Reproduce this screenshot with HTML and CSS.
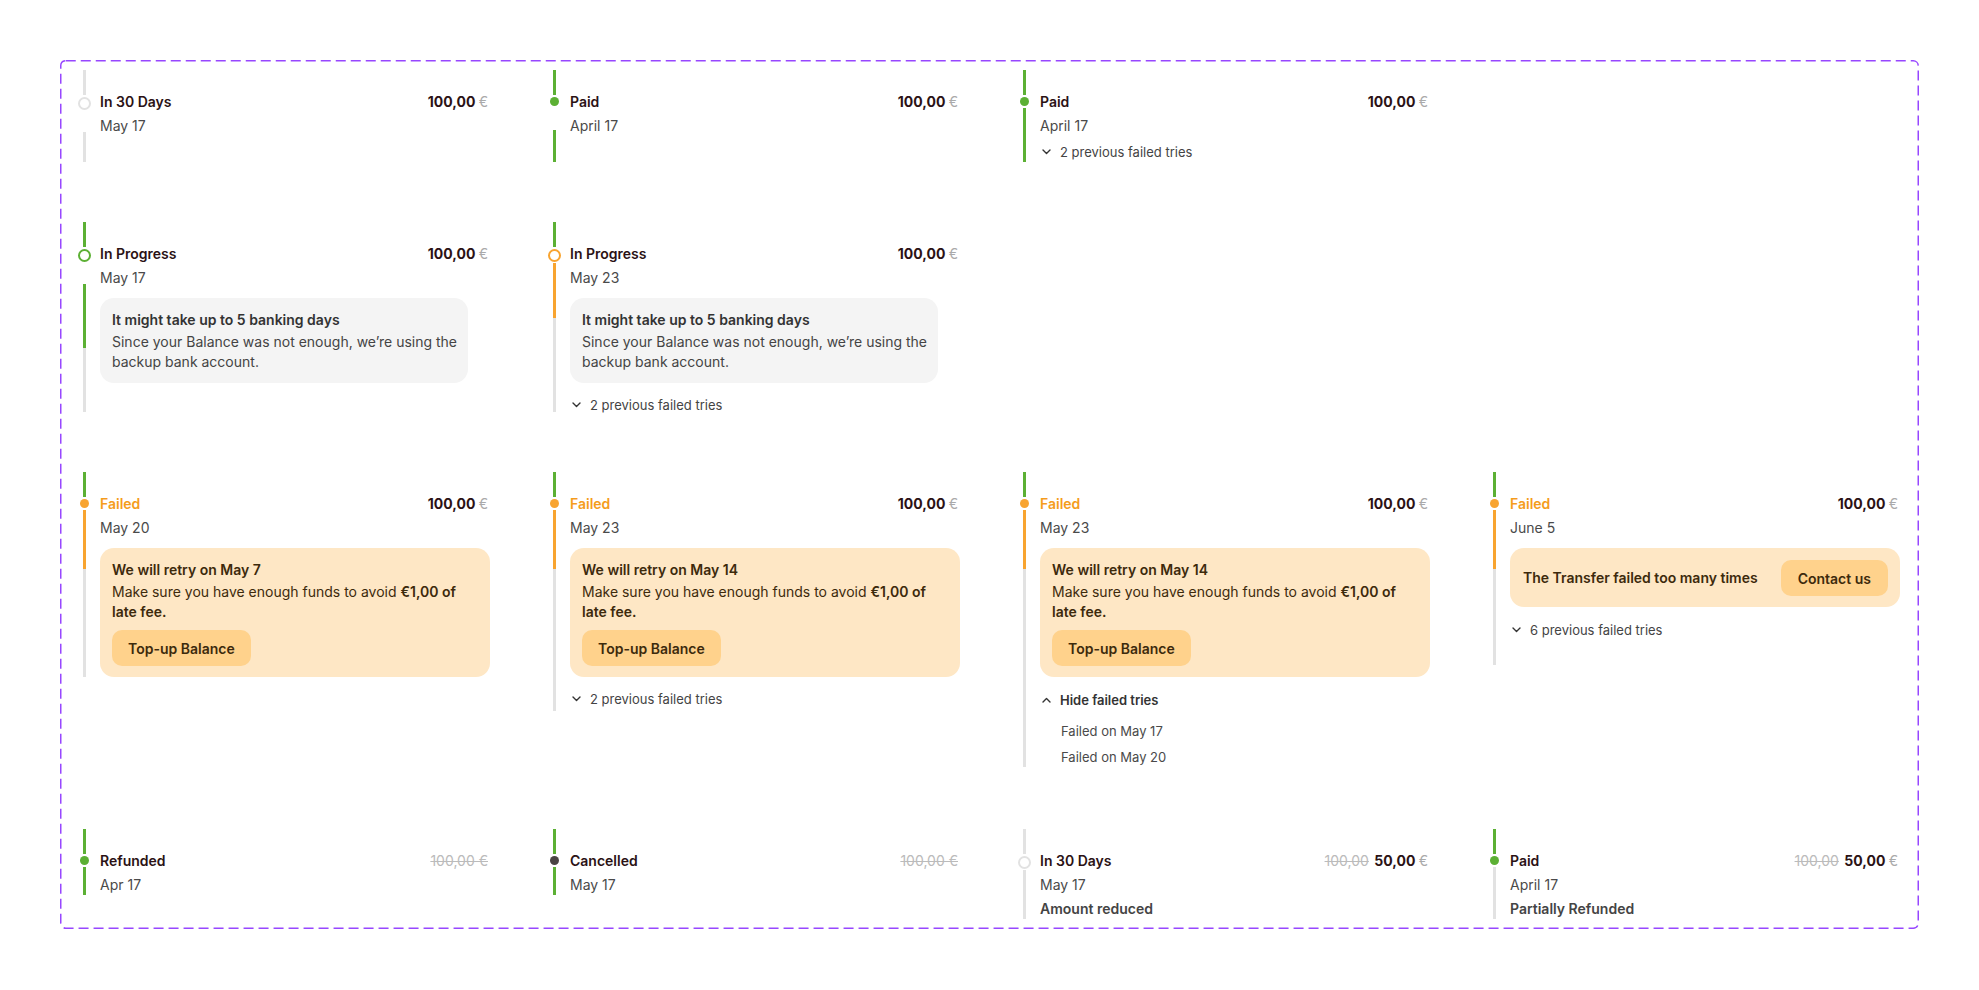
FILE: index.html
```html
<!DOCTYPE html>
<html lang="en">

<head>
    <meta charset="UTF-8">
    <meta name="viewport" content="width=device-width, initial-scale=1.0">
    <title>Payment Timeline Item</title>
    <link rel="stylesheet" href="styles.css">
</head>

<body>
    <div class="frame">

        <!-- row 1 -->
        <div class="item h92">
            <div class="rail">
                <span class="seg grey top"></span>
                <span class="ring grey"></span>
                <span class="space s21"></span>
                <span class="seg grey fill"></span>
            </div>
            <div class="body">
                <div class="head"><span class="title">In 30 Days</span><span class="amount">100,00 <span class="cur">€</span></span></div>
                <div class="date">May 17</div>
            </div>
        </div>

        <div class="item h92">
            <div class="rail">
                <span class="seg green top"></span>
                <span class="dot green"></span>
                <span class="space s22"></span>
                <span class="seg green fill"></span>
            </div>
            <div class="body">
                <div class="head"><span class="title">Paid</span><span class="amount">100,00 <span class="cur">€</span></span></div>
                <div class="date">April 17</div>
            </div>
        </div>

        <div class="item h92">
            <div class="rail">
                <span class="seg green top"></span>
                <span class="dot green"></span>
                <span class="seg green fill"></span>
            </div>
            <div class="body">
                <div class="head"><span class="title">Paid</span><span class="amount">100,00 <span class="cur">€</span></span></div>
                <div class="date">April 17</div>
                <div class="tries near">
                    <svg class="chev" viewBox="0 0 9 6"><path d="M1 1l3.5 3.5L8 1" /></svg>
                    <span>2 previous failed tries</span>
                </div>
            </div>
        </div>

        <div></div>

        <!-- row 2 -->
        <div class="item h190">
            <div class="rail">
                <span class="seg green top"></span>
                <span class="ring green"></span>
                <span class="space s21"></span>
                <span class="seg green l64"></span>
                <span class="seg grey fill"></span>
            </div>
            <div class="body">
                <div class="head"><span class="title">In Progress</span><span class="amount">100,00 <span class="cur">€</span></span></div>
                <div class="date">May 17</div>
                <div class="note">
                    <div class="note-title">It might take up to 5 banking days</div>
                    <div class="note-text">Since your Balance was not enough, we’re using the<br>backup bank account.</div>
                </div>
            </div>
        </div>

        <div class="item h190">
            <div class="rail">
                <span class="seg green top"></span>
                <span class="ring orange"></span>
                <span class="seg orange l55"></span>
                <span class="seg grey fill"></span>
            </div>
            <div class="body">
                <div class="head"><span class="title">In Progress</span><span class="amount">100,00 <span class="cur">€</span></span></div>
                <div class="date">May 23</div>
                <div class="note">
                    <div class="note-title">It might take up to 5 banking days</div>
                    <div class="note-text">Since your Balance was not enough, we’re using the<br>backup bank account.</div>
                </div>
                <div class="tries">
                    <svg class="chev" viewBox="0 0 9 6"><path d="M1 1l3.5 3.5L8 1" /></svg>
                    <span>2 previous failed tries</span>
                </div>
            </div>
        </div>

        <div></div>
        <div></div>

        <!-- row 3 -->
        <div class="item">
            <div class="rail">
                <span class="seg green top"></span>
                <span class="dot orange"></span>
                <span class="seg orange l59"></span>
                <span class="seg grey fill"></span>
            </div>
            <div class="body">
                <div class="head"><span class="title failed">Failed</span><span class="amount">100,00 <span class="cur">€</span></span></div>
                <div class="date">May 20</div>
                <div class="alert">
                    <div class="alert-title">We will retry on May 7</div>
                    <div class="alert-text">Make sure you have enough funds to avoid <b>€1,00 of late fee.</b></div>
                    <button class="btn">Top-up Balance</button>
                </div>
            </div>
        </div>

        <div class="item">
            <div class="rail">
                <span class="seg green top"></span>
                <span class="dot orange"></span>
                <span class="seg orange l59"></span>
                <span class="seg grey fill"></span>
            </div>
            <div class="body pad-small">
                <div class="head"><span class="title failed">Failed</span><span class="amount">100,00 <span class="cur">€</span></span></div>
                <div class="date">May 23</div>
                <div class="alert">
                    <div class="alert-title">We will retry on May 14</div>
                    <div class="alert-text">Make sure you have enough funds to avoid <b>€1,00 of late fee.</b></div>
                    <button class="btn">Top-up Balance</button>
                </div>
                <div class="tries">
                    <svg class="chev" viewBox="0 0 9 6"><path d="M1 1l3.5 3.5L8 1" /></svg>
                    <span>2 previous failed tries</span>
                </div>
            </div>
        </div>

        <div class="item">
            <div class="rail">
                <span class="seg green top"></span>
                <span class="dot orange"></span>
                <span class="seg orange l59"></span>
                <span class="seg grey fill"></span>
            </div>
            <div class="body">
                <div class="head"><span class="title failed">Failed</span><span class="amount">100,00 <span class="cur">€</span></span></div>
                <div class="date">May 23</div>
                <div class="alert">
                    <div class="alert-title">We will retry on May 14</div>
                    <div class="alert-text">Make sure you have enough funds to avoid <b>€1,00 of late fee.</b></div>
                    <button class="btn">Top-up Balance</button>
                </div>
                <div class="tries open">
                    <svg class="chev" viewBox="0 0 9 6"><path d="M1 5l3.5-3.5L8 5" /></svg>
                    <span>Hide failed tries</span>
                </div>
                <ul class="tries-list">
                    <li>Failed on May 17</li>
                    <li>Failed on May 20</li>
                </ul>
            </div>
        </div>

        <div class="item">
            <div class="rail">
                <span class="seg green top"></span>
                <span class="dot orange"></span>
                <span class="seg orange l59"></span>
                <span class="seg grey fill"></span>
            </div>
            <div class="body pad-end">
                <div class="head"><span class="title failed">Failed</span><span class="amount">100,00 <span class="cur">€</span></span></div>
                <div class="date">June 5</div>
                <div class="alert row">
                    <div class="alert-title">The Transfer failed too many times</div>
                    <button class="btn">Contact us</button>
                </div>
                <div class="tries far">
                    <svg class="chev" viewBox="0 0 9 6"><path d="M1 1l3.5 3.5L8 1" /></svg>
                    <span>6 previous failed tries</span>
                </div>
            </div>
        </div>

        <!-- row 4 -->
        <div class="item last">
            <div class="rail">
                <span class="seg green top"></span>
                <span class="dot green"></span>
                <span class="seg green fill"></span>
            </div>
            <div class="body">
                <div class="head"><span class="title">Refunded</span><span class="amount struck">100,00 €</span></div>
                <div class="date">Apr 17</div>
            </div>
        </div>

        <div class="item last">
            <div class="rail">
                <span class="seg green top"></span>
                <span class="dot dark"></span>
                <span class="seg green fill"></span>
            </div>
            <div class="body">
                <div class="head"><span class="title">Cancelled</span><span class="amount struck">100,00 €</span></div>
                <div class="date">May 17</div>
            </div>
        </div>

        <div class="item last">
            <div class="rail">
                <span class="seg grey top"></span>
                <span class="ring grey"></span>
                <span class="seg grey fill"></span>
            </div>
            <div class="body">
                <div class="head"><span class="title">In 30 Days</span><span class="amount"><s>100,00</s> 50,00 <span class="cur">€</span></span></div>
                <div class="date">May 17</div>
                <div class="extra">Amount reduced</div>
            </div>
        </div>

        <div class="item last">
            <div class="rail">
                <span class="seg green top"></span>
                <span class="dot green"></span>
                <span class="seg grey fill"></span>
            </div>
            <div class="body">
                <div class="head"><span class="title">Paid</span><span class="amount"><s>100,00</s> 50,00 <span class="cur">€</span></span></div>
                <div class="date">April 17</div>
                <div class="extra">Partially Refunded</div>
            </div>
        </div>

    </div>
</body>

</html>
```

FILE: styles.css
```css
body {
    margin: 0;
    background-color: #fff;
    font-family: Inter, "Noto Sans", sans-serif;
    color: #2b1215;
}

.frame {
    margin: 60px 0 0 60px;
    width: 1859px;
    height: 869px;
    box-sizing: border-box;
    padding: 10px 16px;
    background: url("data:image/svg+xml,%3Csvg xmlns='http://www.w3.org/2000/svg' width='1859' height='869'%3E%3Crect x='0.75' y='0.75' width='1857.5' height='867.5' rx='5' fill='none' stroke='%239747FF' stroke-width='1.5' stroke-dasharray='10 5'/%3E%3C/svg%3E") no-repeat;
    display: grid;
    grid-template-columns: repeat(4, 414px);
    column-gap: 56px;
    row-gap: 60px;
    align-items: start;
    align-content: start;
}

/* one timeline entry */
.item {
    display: flex;
    gap: 8px;
}

.item.h92 {
    min-height: 92px;
}

.item.h190 {
    height: 190px;
}

.item.last {
    margin-top: 2px;
}

.rail {
    width: 16px;
    flex: none;
    display: flex;
    flex-direction: column;
    align-items: center;
}

.seg {
    width: 3px;
    flex: none;
}

.seg.top {
    height: 25px;
}

.seg.l55 {
    height: 55px;
}

.seg.l59 {
    height: 59px;
}

.seg.l64 {
    height: 64px;
}

.seg.fill {
    flex: 1;
}

.space {
    flex: none;
}

.space.s21 {
    height: 21px;
}

.space.s22 {
    height: 22px;
}

.seg.green {
    background-color: #5cb034;
}

.seg.orange {
    background-color: #f8a430;
}

.seg.grey {
    background-color: #e2e2e2;
}

.dot {
    width: 9px;
    height: 9px;
    border-radius: 50%;
    margin: 2px 0;
    flex: none;
}

.dot.green {
    background-color: #5cb034;
}

.dot.orange {
    background-color: #f8a430;
}

.dot.dark {
    background-color: #4a4444;
}

.ring {
    width: 13px;
    height: 13px;
    box-sizing: border-box;
    border-radius: 50%;
    border: 2.5px solid #e2e2e2;
    margin: 2px 0 1px;
    flex: none;
}

.ring.green {
    border-color: #5cb034;
}

.ring.orange {
    border-color: #f8a430;
}

.body {
    flex: 1;
    min-width: 0;
    padding-top: 22px;
    font-size: 14px;
    line-height: 20px;
}

.body.pad-end {
    padding-bottom: 26px;
}

.body.pad-small {
    padding-bottom: 3px;
}

.head {
    display: flex;
    justify-content: space-between;
    align-items: baseline;
    padding-right: 2px;
}

.title {
    font-weight: 600;
    color: #2b1215;
}

.title.failed {
    color: #f59c1c;
}

.amount {
    font-weight: 700;
    color: #2b1215;
}

.amount .cur {
    font-weight: 400;
    color: #aaa;
}

.amount s {
    font-weight: 400;
    color: #bbb;
    margin-right: 2px;
}

.amount.struck {
    font-weight: 400;
    color: #bbb;
    text-decoration: line-through;
}

.date {
    margin-top: 4px;
    color: #4a4a4a;
}

.extra {
    margin-top: 4px;
    font-weight: 600;
    color: #444;
}

/* grey info box */
.note {
    margin-top: 10px;
    width: fit-content;
    box-sizing: border-box;
    padding: 12px 11px 11px 12px;
    border-radius: 14px;
    background-color: #f4f4f4;
    color: #444;
    white-space: nowrap;
}

.note-title {
    font-weight: 600;
    color: #333;
    margin-bottom: 2px;
}

/* orange warning box */
.alert {
    margin-top: 10px;
    padding: 12px 12px 11px;
    border-radius: 14px;
    background-color: #fee7c5;
    color: #3d2a0c;
}

.alert-title {
    font-weight: 600;
    margin-bottom: 2px;
}

.alert-text b {
    font-weight: 600;
}

.alert.row {
    display: flex;
    justify-content: space-between;
    align-items: center;
    padding-left: 13px;
}

.alert.row .alert-title {
    margin: 0;
}

.btn {
    margin-top: 8px;
    height: 36px;
    padding: 0 16px;
    border: none;
    border-radius: 10px;
    background-color: #ffd28c;
    color: #3d2a0c;
    font-family: inherit;
    font-size: 14px;
    font-weight: 600;
    cursor: pointer;
}

.alert.row .btn {
    margin: 0;
    padding: 0 17px;
}

/* failed tries toggle */
.tries {
    margin-top: 13px;
    display: flex;
    align-items: center;
    gap: 9px;
    padding-left: 2px;
    font-size: 13px;
    line-height: 18px;
    color: #444;
}

.tries.near {
    margin-top: 7px;
}

.tries.far {
    margin-top: 14px;
}

.tries.open {
    margin-top: 14px;
    font-weight: 600;
    color: #333;
}

.chev {
    width: 9px;
    height: 6px;
    flex: none;
}

.chev path {
    fill: none;
    stroke: #333;
    stroke-width: 1.4;
    stroke-linecap: round;
    stroke-linejoin: round;
}

.tries-list {
    list-style: none;
    margin: 12px 0 0;
    padding: 0 0 0 21px;
    font-size: 13px;
    line-height: 20px;
    color: #4a4a4a;
}

.tries-list li + li {
    margin-top: 6px;
}
```
